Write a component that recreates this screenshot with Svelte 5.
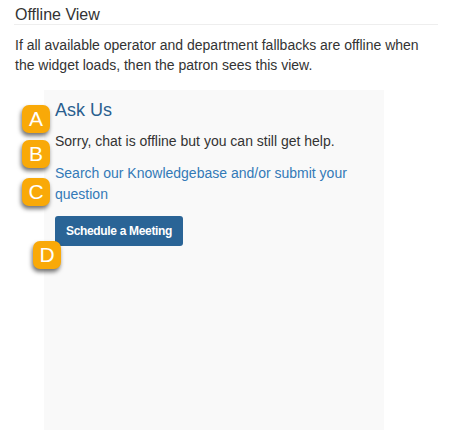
<script>
  const badges = [
    { label: 'A', cls: 'a' },
    { label: 'B', cls: 'b' },
    { label: 'C', cls: 'c' },
    { label: 'D', cls: 'd' }
  ];
</script>

<main>
  <h2>Offline View</h2>
  <p class="intro">If all available operator and department fallbacks are offline when the widget loads, then the patron sees this view.</p>

  <div class="shot">
    <section class="panel">
      <h3>Ask Us</h3>
      <p>Sorry, chat is offline but you can still get help.</p>
      <p class="link"><a href="#kb">Search our Knowledgebase and/or submit your question</a></p>
      <button type="button">Schedule a Meeting</button>
    </section>
    {#each badges as b}
      <span class="badge {b.cls}">{b.label}</span>
    {/each}
  </div>
</main>

<style>
  :global(body){margin:0;background:#fff;font-family:"Liberation Sans",Arial,sans-serif;color:#333}
  main{width:424px;margin-left:14px;padding-top:7px}
  h2{margin:0;padding:0 0 2px 1px;font-size:16px;line-height:15px;font-weight:400;color:#333;border-bottom:1px solid #eee}
  .intro{margin:10px 0 0 1px;font-size:14px;line-height:20px}
  .shot{position:relative;margin:15px 0 0 30px;width:340px}
  .panel{height:340px;box-sizing:border-box;background:#f9f9f9;padding:9px 11px}
  h3{margin:0;font-size:18px;line-height:22px;font-weight:400;color:#2a5f8f}
  .panel p{margin:10px 0 0;font-size:14px;line-height:20px}
  .panel p.link{margin-top:12px;line-height:21px}
  a{color:#337ab7;text-decoration:none}
  button{display:block;margin-top:11px;height:30px;padding:0 11px;border:0;border-radius:3px;background:#2a6496;color:#fff;font:700 12px "Liberation Sans",Arial,sans-serif;letter-spacing:-.33px}
  .badge{position:absolute;width:28px;height:28px;border-radius:7px;background:#f9a908;color:#fff;font-size:21px;line-height:28px;text-align:center;box-shadow:-1px 3px 4px rgba(0,0,0,.55)}
  .a{left:-22px;top:15px}
  .b{left:-22px;top:50px}
  .c{left:-22px;top:88px}
  .d{left:-11px;top:151px}
</style>
